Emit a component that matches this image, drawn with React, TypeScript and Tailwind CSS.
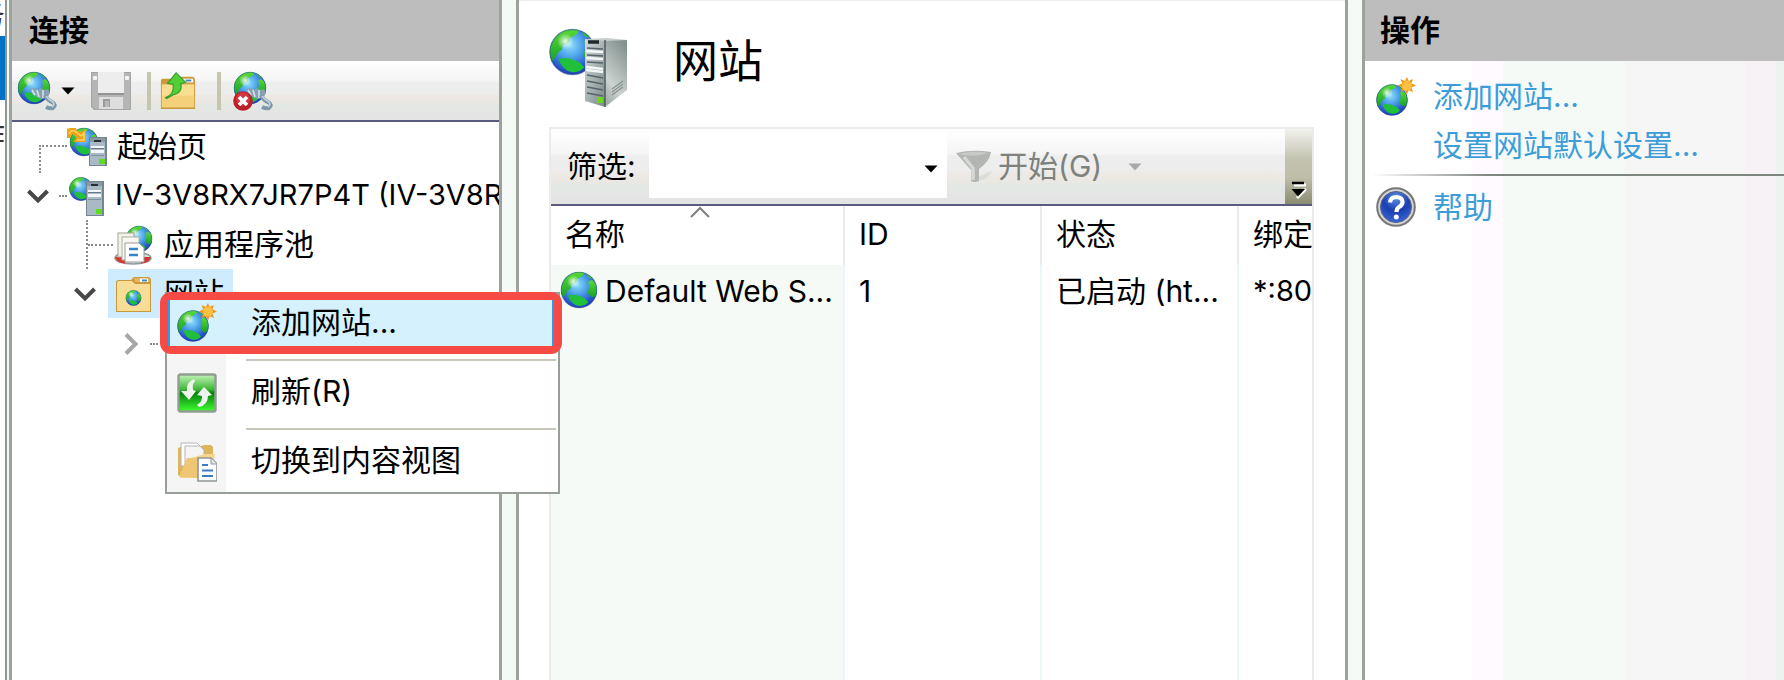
import React, { useId } from 'react';

type P = { className?: string };

function GlobeShape({ cx, cy, r, id }: { cx: number; cy: number; r: number; id: string }) {
  return (
    <g transform={`translate(${cx - r} ${cy - r}) scale(${r / 20})`}>
      <defs>
        <radialGradient id={id + 's'} cx="0.45" cy="0.35" r="0.7">
          <stop offset="0" stopColor="#8fe0fb" />
          <stop offset="0.4" stopColor="#4a9fe8" />
          <stop offset="0.8" stopColor="#2450c4" />
          <stop offset="1" stopColor="#2a3aa0" />
        </radialGradient>
        <linearGradient id={id + 'l'} x1="0" y1="0" x2="0" y2="1">
          <stop offset="0" stopColor="#58da34" />
          <stop offset="1" stopColor="#18a02c" />
        </linearGradient>
        <radialGradient id={id + 'h'}>
          <stop offset="0" stopColor="#ffffff" stopOpacity="0.9" />
          <stop offset="1" stopColor="#ffffff" stopOpacity="0" />
        </radialGradient>
        <clipPath id={id + 'c'}>
          <circle cx="20" cy="20" r="19.4" />
        </clipPath>
      </defs>
      <circle cx="20" cy="20" r="19.4" fill={`url(#${id}s)`} />
      <g clipPath={`url(#${id}c)`}>
        <path d="M0 24 V6 L10 0 H24 Q27 3 22 6 L18 8 L17 12 L12 14 L11 18 Q7 20 6 24 L2 29 Z" fill={`url(#${id}l)`} />
        <path d="M27 2 L33 3 L36 8 L31 7 Z" fill="#3fc23a" />
        <path d="M30 11 L34 9 Q41 14 40 26 L34 28 L29 23 Q32 17 30 11 Z" fill={`url(#${id}l)`} />
        <path d="M8 26 Q16 23 26 29 L30 33 Q26 38 19 37 Q12 36 8 26 Z" fill="#1fc13a" />
        <circle cx="14" cy="11" r="7" fill={`url(#${id}h)`} />
      </g>
      <circle cx="20" cy="20" r="19.2" fill="none" stroke="#25449a" strokeOpacity="0.45" strokeWidth="1.2" />
    </g>
  );
}

const uid = () => 'g' + useId().replace(/[^a-zA-Z0-9]/g, '');

function GlobeIcon({ className }: P) {
  const id = uid();
  return (
    <svg viewBox="0 0 40 40" className={className} aria-hidden="true">
      <GlobeShape cx={20} cy={19} r={18.5} id={id} />
    </svg>
  );
}

function GlobeNewIcon({ className }: P) {
  const id = uid();
  return (
    <svg viewBox="0 0 40 40" className={className} aria-hidden="true">
      <GlobeShape cx={16} cy={23} r={16} id={id} />
      <path
        d="M31 0 L32.6 4 L37 2 L35.4 6.2 L40 8.5 L35.4 10.6 L37 15 L32.6 13.2 L31 17.5 L28.8 13.2 L24.5 15 L26.2 10.6 L22 8.5 L26.2 6.2 L24.5 2 L28.8 4 Z"
        fill="#f0941c"
      />
      <circle cx="30.9" cy="8.6" r="5" fill="#ffc040" />
    </svg>
  );
}

function Plug() {
  return (
    <g>
      <path d="M13 18 L18 17 L21 19 L24 17 L27 19 L31 18 L33 22 L30 27 L24 28 L16 24 Z" fill="#86a2b2" />
      <path d="M15 19 L18 24 M20 19 L22 26 M26 19 V27" stroke="#d5e2e8" strokeWidth="1.6" fill="none" />
      <path d="M28 24 Q31 30 35 31 Q40 34 36 37 Q33 38 29 36" stroke="#7d98a8" strokeWidth="4" fill="none" />
      <path d="M29 25 Q32 29 36 31 Q38 34 35 36" stroke="#c3d3dc" strokeWidth="1.600" fill="none" />
    </g>
  );
}

function ConnectIcon({ className }: P) {
  const id = uid();
  return (
    <svg viewBox="0 0 40 40" className={className} aria-hidden="true">
      <GlobeShape cx={17} cy={17} r={16.5} id={id} />
      <Plug />
    </svg>
  );
}

function DisconnectIcon({ className }: P) {
  const id = uid();
  return (
    <svg viewBox="0 0 40 40" className={className} aria-hidden="true">
      <GlobeShape cx={17} cy={17} r={16.5} id={id} />
      <Plug />
      <circle cx="10" cy="30" r="9.8" fill="#bb1f2a" />
      <circle cx="10" cy="28" r="7" fill="#dd4a50" fillOpacity="0.6" />
      <path d="M6 26 L14 34 M14 26 L6 34" stroke="#ffffff" strokeWidth="3.6" />
    </svg>
  );
}

function SaveIcon({ className }: P) {
  return (
    <svg viewBox="0 0 40 40" className={className} aria-hidden="true">
      <path d="M0 1 H40 V39 H3 L0 36 Z" fill="#a5a5a5" />
      <path d="M1 2 H39 V38 H4 L1 35 Z" fill="#b5b5b5" />
      <rect x="7" y="1" width="26" height="22" fill="#ededed" />
      <rect x="7" y="22" width="26" height="2" fill="#949494" />
      <rect x="2" y="5" width="4" height="4" rx="1" fill="#f4f4f4" />
      <rect x="34" y="5" width="4" height="4" rx="1" fill="#f4f4f4" />
      <rect x="8" y="26" width="24" height="12" fill="#dedede" />
      <rect x="12" y="28" width="7" height="8" fill="#9b9b9b" />
      <rect x="14" y="30" width="4" height="6" fill="#b9b9b9" />
    </svg>
  );
}

function FolderUpIcon({ className }: P) {
  return (
    <svg viewBox="0 0 40 40" className={className} aria-hidden="true">
      <path d="M2 9 Q2 7 4 7 H22 L24 5 H36 Q38 6 38 9 V39 H2 Z" fill="#c9993a" />
      <path d="M3 13 H37 V37 H3 Z" fill="#f9dd90" />
      <path d="M3 25 H37 V37 H3 Z" fill="#f5d07a" />
      <path d="M3 12 H37 V13 H3 Z" fill="#d9aa44" />
      <path d="M25 7 H36 V11 H25 Z" fill="#ffffff" />
      <path d="M28 8 H34 V10 H28 Z" fill="#3f87c6" />
      <path d="M7 27 Q16 24 15 13 L9 12 L18 1 L28 11 L23 12 Q25 22 15 24 L8 28 Z" fill="#52cf36" stroke="#319c2c" strokeWidth="1.2" />
    </svg>
  );
}

function Tower({ x, y, h }: { x: number; y: number; h: number }) {
  return (
    <g transform={`translate(${x} ${y})`}>
      <rect x="0" y="0" width="18" height={h} fill="#73858f" />
      <rect x="1" y="1" width="15" height={h - 2} fill="#a9bac4" />
      <rect x="1" y="1" width="15" height="4" fill="#8a99a3" />
      <rect x="5" y="3" width="7" height="2" fill="#243038" />
      <rect x="2" y="9" width="13" height="2" fill="#f2f6f8" />
      <rect x="2" y="13" width="13" height="3" fill="#f2f6f8" />
      <rect x="2" y="11" width="13" height="1" fill="#6b7b85" />
      <rect x="2" y="18" width="13" height="1" fill="#7f909a" />
      <rect x="10" y={h - 7} width="6" height="5" fill="#5fdc1f" />
    </g>
  );
}

function StartPageIcon({ className }: P) {
  const id = uid();
  return (
    <svg viewBox="0 0 40 40" className={className} aria-hidden="true">
      <GlobeShape cx={17} cy={15} r={14.5} id={id} />
      <Tower x={22} y={10} h={29} />
      <path d="M0 11 V3 Q0 1 3 1 H9 L10 4 L14 5 L19 2 V15 H6 L10 10 L5 7 L3 11 Z" fill="#f2a01a" />
      <path d="M2 7 Q3 3 8 4 L14 9 L17 6 V13 H10" stroke="#ffd45e" strokeWidth="1.600" fill="none" />
    </svg>
  );
}

function ServerIcon({ className }: P) {
  const id = uid();
  return (
    <svg viewBox="0 0 40 40" className={className} aria-hidden="true">
      <GlobeShape cx={14} cy={13} r={12} id={id} />
      <Tower x={19} y={5} h={35} />
    </svg>
  );
}

function PoolIcon({ className }: P) {
  const id = uid();
  return (
    <svg viewBox="0 0 40 40" className={className} aria-hidden="true">
      <GlobeShape cx={26} cy={14} r={13.5} id={id} />
      <ellipse cx="20" cy="33" rx="18" ry="6" fill="#d9dfe2" stroke="#8f999f" strokeWidth="1.500" />
      <path d="M2 32 Q4 38 12 38.500 L13 32 Z M38 32 Q36 38 28 38.500 L27 32 Z" fill="#d6362c" />
      <rect x="5" y="8" width="16" height="24" fill="#f3f3ea" stroke="#a4a49a" />
      <rect x="9" y="12" width="17" height="23" fill="#f8f8f2" stroke="#b0b0a8" />
      <path d="M12 18 H26 L31 23 V37 H12 Z" fill="#ffffff" stroke="#9a9a94" />
      <path d="M16 24 H25 M16 30 H25" stroke="#3a82c8" strokeWidth="2.600" />
    </svg>
  );
}

function SitesFolderIcon({ className }: P) {
  const id = uid();
  return (
    <svg viewBox="0 0 40 40" className={className} aria-hidden="true">
      <path d="M2 9 Q2 6 5 6 H17 L20 3 H34 Q37 3 37 7 V38 H2 Z" fill="#c9993a" />
      <path d="M3 9 Q3 7 5 7 H18 L21 10 H36 V37 H3 Z" fill="#f8dd96" />
      <path d="M20 4 H34 Q36 5 36 8 H21 Z" fill="#e9b457" />
      <path d="M26 4.500 H34 V8 H26 Z" fill="#ffffff" />
      <path d="M28 5.500 H33 V7.500 H28 Z" fill="#3f87c6" />
      <GlobeShape cx={19.500} cy={24} r={8} id={id} />
    </svg>
  );
}

function RefreshIcon({ className }: P) {
  const id = uid();
  return (
    <svg viewBox="0 0 40 40" className={className} aria-hidden="true">
      <defs>
        <linearGradient id={id} x1="0" y1="0" x2="0" y2="1">
          <stop offset="0" stopColor="#c3f5b7" />
          <stop offset="0.4" stopColor="#3fb83a" />
          <stop offset="0.5" stopColor="#067f0c" />
          <stop offset="1" stopColor="#3dff2f" />
        </linearGradient>
      </defs>
      <rect x="1.500" y="1.500" width="37" height="37" rx="2" fill={`url(#${id})`} stroke="#929c92" strokeWidth="2.400" />
      <path d="M17 6 Q9 9 10 18 L4 18 L12 27 L19 18 L16 17 Q15 11 18 8 Z" fill="#eef3ec" />
      <path d="M22 34 Q31 32 31 23 L35 22 L27 14 L20 22 L25 23 Q26 28 20 32 Z" fill="#eef3ec" />
    </svg>
  );
}

function ContentViewIcon({ className }: P) {
  return (
    <svg viewBox="0 0 40 40" className={className} aria-hidden="true">
      <path d="M1 6 L6 4 H24 L27 3 H34 L36 5 V35 H5 L1 33 Z" fill="#dcb55c" />
      <path d="M4 1 H20 L24 5 V24 H4 Z" fill="#ffffff" stroke="#b4b4b4" />
      <path d="M8 4 H23 L27 8 V24 H8 Z" fill="#f5f5f5" stroke="#b4b4b4" />
      <path d="M10 17 L28 12 H38 L34 36 H3 Z" fill="#f5d78c" />
      <path d="M2 35 L10 16 H26 L20 36 Z" fill="#eec674" />
      <path d="M21 16 H34 L40 22 V39 H21 Z" fill="#ffffff" stroke="#8f9699" strokeWidth="1.600" />
      <path d="M34 16 V22 H40" fill="#e4e4e4" stroke="#8f9699" />
      <path d="M25 23 H31 M25 28.500 H36 M25 34 H36" stroke="#3b7cc4" strokeWidth="2.200" />
    </svg>
  );
}

function SitesLargeIcon({ className }: P) {
  const id = uid();
  return (
    <svg viewBox="0 0 80 80" className={className} aria-hidden="true">
      <defs>
        <linearGradient id={id + 'f'} x1="0" y1="0" x2="1" y2="1">
          <stop offset="0" stopColor="#d3dbdb" />
          <stop offset="1" stopColor="#7b8988" />
        </linearGradient>
        <linearGradient id={id + 't'} x1="0.700" y1="0" x2="0.300" y2="1">
          <stop offset="0" stopColor="#84928f" />
          <stop offset="0.700" stopColor="#ccd3d0" />
          <stop offset="1" stopColor="#a3adaa" />
        </linearGradient>
      </defs>
      <GlobeShape cx={23.500} cy={24} r={23.500} id={id} />
      <path d="M36 11 L56 12 V79 L36 73 Z" fill={`url(#${id}f)`} />
      <path d="M56 12 L78 12 V62 L56 79 Z" fill={`url(#${id}t)`} />
      <path d="M36 11 L59 10 L78 12 L56 13 Z" fill="#c9cfce" />
      <path d="M39 14 L50 14" stroke="#20282c" strokeWidth="3.500" />
      <path d="M38 20 L54 21 M38 27 L54 28 M38 34 L54 35 M38 47 L54 50 M38 53 L54 56 M38 59 L54 62 M38 65 L54 68" stroke="#55646a" strokeWidth="1.600" />
      <path d="M37 23 L54 24 M37 30 L54 31 M37 39 L54 41 M37 42 L54 44" stroke="#f4f7f7" strokeWidth="2.500" />
      <path d="M56 12 V79" stroke="#4f5d60" strokeWidth="1.500" />
      <path d="M63 61 L74 53 M63 64 L74 56 M63 67 L74 59" stroke="#86918e" strokeWidth="1.200" />
      <rect x="48" y="69" width="6" height="6" fill="#6fd620" />
    </svg>
  );
}

function FunnelIcon({ className }: P) {
  return (
    <svg viewBox="0 0 36 34" className={className} aria-hidden="true">
      <path d="M22 27 L36 21 L30 29 L22 31 Z" fill="#dcdcdc" />
      <path d="M0 3 Q17 -1 35 2 Q34 11 23 19 V31 Q19 33 15 31 V20 Z" fill="#b2b5b2" />
      <path d="M2 4 Q17 0 33 3 Q17 8 2 4 Z" fill="#c6c9c6" />
      <path d="M8 7 L17 18 V30" stroke="#d6d8d6" strokeWidth="3.500" fill="none" />
    </svg>
  );
}

function HelpIcon({ className }: P) {
  const id = uid();
  return (
    <svg viewBox="0 0 40 40" className={className} aria-hidden="true">
      <defs>
        <radialGradient id={id} cx="0.5" cy="0.2" r="0.85">
          <stop offset="0" stopColor="#5f8df0" />
          <stop offset="0.5" stopColor="#1b3fae" />
          <stop offset="1" stopColor="#3a6be0" />
        </radialGradient>
      </defs>
      <circle cx="20" cy="20" r="18.800" fill="#d4d4d4" stroke="#777777" strokeWidth="2" />
      <circle cx="20" cy="20" r="15.500" fill={`url(#${id})`} stroke="#5a6480" />
      <path d="M14 15.500 Q14.500 10 20.500 10 Q26.500 10.500 26.500 15 Q26.500 18 23 20 Q20.500 21.500 20.500 25" fill="none" stroke="#ffffff" strokeWidth="4.200" />
      <circle cx="20.300" cy="30" r="2.500" fill="#ffffff" />
    </svg>
  );
}

function Triangle({ className }: P) {
  return (
    <svg viewBox="0 0 14 8" className={className} aria-hidden="true">
      <path d="M0.500 0.500 H13.500 L7 7.500 Z" fill="currentColor" />
    </svg>
  );
}

function Chevron({ open }: { open: boolean }) {
  return (
    <svg
      viewBox="0 0 22 22"
      className={open ? 'block size-[22px] shrink-0 text-[#484848]' : 'block size-[22px] shrink-0 text-[#a6a6a6]'}
      aria-hidden="true"
    >
      <path d={open ? 'M1.500 6 L11 15.500 L20.500 6' : 'M6 1.500 L15.500 11 L6 20.500'} fill="none" stroke="currentColor" strokeWidth="4" />
    </svg>
  );
}

const toolbarBg =
  'bg-[linear-gradient(to_bottom,#ffffff_0%,#f8faf8_18%,#f5f5f5_33%,#eeeeee_36%,#ededed_56%,#ede9e4_58%,#ebe7e3_70%,#e4e8e4_73%,#e3e6e3_87%,#e4e4e4_90%)]';

function Gutter() {
  return (
    <div className="flex w-[20px] shrink-0 justify-between bg-[#f5faf6]">
      <div className="w-[3px] bg-[#9da29d]" />
      <div className="w-[3px] bg-[#9da29d]" />
    </div>
  );
}

function Divider() {
  return <div className="h-[38px] w-[4px] bg-[#c6c6b0]" />;
}

function Dots({ className }: P) {
  return <span aria-hidden="true" className={'border-dotted border-[#8a8a8a] ' + className} />;
}

function ConnectionsPane() {
  return (
    <section className="flex w-[487px] shrink-0 flex-col bg-white">
      <h2 className="flex h-[61px] items-center bg-[#bdbdbd] pb-[2px] pl-[17px] font-bold">连接</h2>
      <div className={'flex h-[61px] items-center border-b-2 border-[#5b5b7e] pl-[5px] ' + toolbarBg}>
        <button type="button" aria-label="连接到" className="flex items-center gap-1">
          <ConnectIcon className="size-[40px]" />
          <Triangle className="h-[8px] w-[14px]" />
        </button>
        <button type="button" aria-label="保存连接" disabled className="ml-4">
          <SaveIcon className="size-[40px]" />
        </button>
        <div className="ml-4"><Divider /></div>
        <button type="button" aria-label="向上" className="ml-2">
          <FolderUpIcon className="size-[38px]" />
        </button>
        <div className="ml-5"><Divider /></div>
        <button type="button" aria-label="断开连接" className="ml-3">
          <DisconnectIcon className="size-[40px]" />
        </button>
      </div>
      <ul className="overflow-hidden whitespace-nowrap">
        <li className="flex h-[49px] items-center pl-[27px]">
          <Dots className="mt-[24px] h-[28px] w-[28px] shrink-0 border-t-2 border-l-2" />
          <StartPageIcon className="size-[40px] shrink-0" />
          <span className="ml-[10px] pb-[2px]">起始页</span>
        </li>
        <li className="flex h-[49px] items-center pl-[15px]">
          <Chevron open />
          <Dots className="ml-[10px] w-[8px] shrink-0 border-t-2" />
          <ServerIcon className="size-[40px] shrink-0" />
          <span className="ml-[8px] pb-[2px] text-[29px]">IV-3V8RX7JR7P4T (IV-3V8R</span>
        </li>
        <li className="flex h-[49px] items-center pl-[74px]">
          <Dots className="h-[49px] shrink-0 border-l-2" />
          <Dots className="w-[25px] shrink-0 border-t-2" />
          <PoolIcon className="size-[40px] shrink-0" />
          <span className="ml-[11px] pb-[2px]">应用程序池</span>
        </li>
        <li className="flex h-[49px] items-center pl-[62px]">
          <Chevron open />
          <span className="ml-[12px] flex h-[49px] w-[125px] items-center bg-[#ceecfe]">
            <SitesFolderIcon className="ml-[6px] size-[40px] shrink-0" />
            <span className="ml-[10px] pb-[2px]">网站</span>
          </span>
        </li>
        <li className="flex h-[51px] items-center pl-[108px]">
          <Chevron open={false} />
          <Dots className="mx-[8px] w-[8px] shrink-0 border-t-2" />
          <GlobeIcon className="size-[40px] shrink-0" />
        </li>
      </ul>
    </section>
  );
}

function SitesPane() {
  const head = 'border-r-2 border-[#ebebeb] px-[14px] pb-1 text-left font-normal';
  const cell = 'overflow-hidden border-r-2 border-[#e9f7fb] px-[14px] whitespace-nowrap';
  return (
    <section className="flex min-w-0 flex-1 flex-col border-t border-[#eeeeee] bg-white pr-[31px] pl-[30px]">
      <header className="flex h-[126px] items-start gap-[44px] pt-[27px]">
        <SitesLargeIcon className="size-[80px]" />
        <h1 className="mt-[11px] text-[45px] leading-none">网站</h1>
      </header>
      <div className="flex flex-1 flex-col border-2 border-b-0 border-[#ebebeb]">
        <div className={'flex h-[77px] border-b-2 border-[#5b5b7e] ' + toolbarBg}>
          <label htmlFor="filter" className="flex w-[98px] items-center pb-[2px] pl-[16px] whitespace-nowrap">筛选:</label>
          <div className="relative mb-[6px] w-[298px] bg-white">
            <input id="filter" className="h-full w-full bg-white px-2 outline-none" />
            <Triangle className="absolute top-[36px] right-[9px] h-[8px] w-[14px]" />
          </div>
          <button type="button" disabled className="ml-[9px] flex items-center text-[#7d827d]">
            <FunnelIcon className="h-[34px] w-[36px] shrink-0" />
            <span className="ml-[6px] pb-[2px] whitespace-nowrap">开始(G)</span>
            <Triangle className="ml-[26px] h-[8px] w-[14px] text-[#a9a9a9]" />
          </button>
          <button
            type="button"
            aria-label="更多"
            className="ml-auto flex w-[27px] items-end justify-center bg-[linear-gradient(to_bottom,#f2f2ee,#c3c3b0_40%,#bdbdaa_65%,#8c8c72)] pb-[5px]"
          >
            <svg viewBox="0 0 16 18" className="h-[18px] w-[16px]" aria-hidden="true">
              <path d="M3 4 H15 M6 17 L15 8" stroke="#ffffff" strokeWidth="3" />
              <path d="M1 2 H13" stroke="#000000" strokeWidth="2.500" />
              <path d="M0.500 8 H14 L7 15.500 Z" fill="#000000" />
            </svg>
          </button>
        </div>
        <div className="relative flex-1">
          <svg viewBox="0 0 20 12" className="absolute top-0 left-[139px] h-[12px] w-[20px]" aria-hidden="true">
            <path d="M1 11 L10 2 L19 11" fill="none" stroke="#7f7f7f" strokeWidth="2" />
          </svg>
          <table className="h-full w-full table-fixed border-collapse">
            <colgroup>
              <col className="w-[293px]" />
              <col className="w-[197px]" />
              <col className="w-[197px]" />
              <col />
            </colgroup>
            <thead>
              <tr className="h-[59px]">
                <th className={head}>名称</th>
                <th className={head}>ID</th>
                <th className={head}>状态</th>
                <th className="overflow-hidden pb-1 pl-[14px] text-left font-normal whitespace-nowrap">绑定</th>
              </tr>
            </thead>
            <tbody>
              <tr className="h-[51px]">
                <td className="border-r-2 border-[#e9f7fb] bg-[#f6faf7] pl-[8px]">
                  <div className="flex items-center">
                    <GlobeIcon className="size-[40px] shrink-0" />
                    <span className="ml-[6px] whitespace-nowrap">Default Web S...</span>
                  </div>
                </td>
                <td className={cell}>1</td>
                <td className={cell}>已启动 (ht...</td>
                <td className="pl-[14px] text-[29px] whitespace-nowrap">*:80</td>
              </tr>
              <tr>
                <td className="border-r-2 border-[#e9f7fb] bg-[#f6faf7]" />
                <td className={cell} />
                <td className={cell} />
                <td />
              </tr>
            </tbody>
          </table>
        </div>
      </div>
    </section>
  );
}

function ActionsPane() {
  return (
    <section className="flex w-[419px] shrink-0 flex-col bg-[linear-gradient(to_right,#ffffff_107px,#fefaff_107px,#fefaff_138px,#f5faf7_138px,#f5faf7_260px,#f6f6f6_260px,#f6f6f6_380px,#f6f2f6_380px,#f6f2f6_411px,#edf3ef_411px)]">
      <h2 className="flex h-[61px] items-center bg-[#bdbdbd] pb-[2px] pl-[15px] font-bold">操作</h2>
      <nav className="text-[#3c9dd9]">
        <a href="#add" className="mt-[11px] flex h-[49px] items-center">
          <GlobeNewIcon className="ml-[11px] size-[40px]" />
          <span className="ml-[17px] pb-[2px]">添加网站...</span>
        </a>
        <a href="#defaults" className="flex h-[49px] items-center pb-[2px] pl-[68px]">设置网站默认设置...</a>
        <div className="mt-1 ml-[6px] h-[2px] bg-[linear-gradient(to_right,#ffffff00,#7f857f_120px)]" />
        <a href="#help" className="mt-[6px] flex h-[49px] items-center">
          <HelpIcon className="ml-[11px] size-[40px]" />
          <span className="ml-[17px]">帮助</span>
        </a>
      </nav>
    </section>
  );
}

function ContextMenu() {
  const item = 'mt-[2px] flex h-[60px] w-full items-center pl-[10px] text-left';
  return (
    <div className="absolute top-[292px] left-[165px] w-[395px] border-2 border-[#989e98] bg-[linear-gradient(to_right,#f5f5f5_59px,#ffffff_59px)]">
      <div className="-mt-[2px] -mr-[4px] -ml-[7px] rounded-[11px] border-8 border-[#f64a45]">
        <button type="button" className="flex h-[46px] w-full items-center border-r-2 border-l-2 border-[#3399e6] bg-[#d5f1fe] pl-[7px] text-left">
          <GlobeNewIcon className="size-[40px]" />
          <span className="ml-[34px] pb-[2px]">添加网站...</span>
        </button>
      </div>
      <div className="mt-[5px] mr-[2px] ml-[79px] h-[2px] bg-[#c6c6bb]" />
      <button type="button" className={item}>
        <RefreshIcon className="size-[40px]" />
        <span className="ml-[34px] pb-[4px]">刷新(R)</span>
      </button>
      <div className="mt-[5px] mr-[2px] ml-[79px] h-[2px] bg-[#c6c6bb]" />
      <button type="button" className={item}>
        <ContentViewIcon className="size-[40px]" />
        <span className="ml-[34px] pb-[4px]">切换到内容视图</span>
      </button>
    </div>
  );
}

export default function App() {
  return (
    <main className="relative flex min-h-screen overflow-hidden bg-white font-[Inter,'Noto_Sans_CJK_SC',sans-serif] text-[30px] leading-none text-black">
      <div className="w-[5px] shrink-0 overflow-hidden text-[#333333]">
        <div className="flex h-[36px] justify-end"><span>务</span></div>
        <div className="h-[64px] bg-[#0073c4]" />
        <div className="flex justify-end pt-[20px]"><span>作</span></div>
      </div>
      <div className="flex w-[7px] shrink-0 justify-between bg-[#f5faf6]">
        <div className="w-[2px] bg-[#8f958f]" />
        <div className="w-[3px] bg-[#9da29d]" />
      </div>
      <ConnectionsPane />
      <Gutter />
      <SitesPane />
      <Gutter />
      <ActionsPane />
      <ContextMenu />
    </main>
  );
}
